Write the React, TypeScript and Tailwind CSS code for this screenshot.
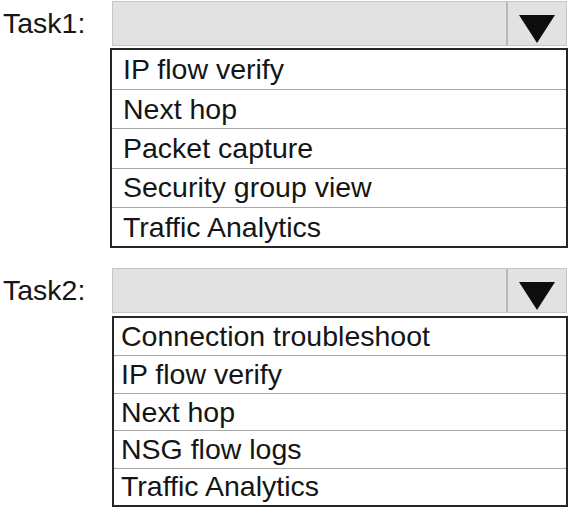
import React from "react";

const font = { fontFamily: '"Liberation Sans", Arial, sans-serif' };

function Arrow() {
  return (
    <svg width="36" height="28" viewBox="0 0 36 28">
      <polygon points="0,0 36,0 18,28" fill="#0d0d0d" />
    </svg>
  );
}

function Box() {
  return (
    <div className="flex-1 mr-[5px] flex border border-[#c6c6c6] bg-[#e2e2e2]">
      <div className="flex-1" />
      <div className="w-[60px] border-l-2 border-[#b8b8b8] flex justify-center pt-[13px]">
        <Arrow />
      </div>
    </div>
  );
}

function List({ items, rowClass, padClass, outerClass }: { items: string[]; rowClass: string; padClass: string; outerClass: string }) {
  return (
    <div className={`border-2 border-[#262626] bg-white ${outerClass}`}>
      {items.map((t, i) => (
        <div
          key={t}
          className={`${rowClass} ${padClass} flex items-center text-[28.5px] text-[#151515] leading-none whitespace-nowrap ${i > 0 ? "border-t border-[#a8a8a8]" : ""}`}
        >
          {t}
        </div>
      ))}
    </div>
  );
}

export default function App() {
  return (
    <div className="w-[572px] h-[513px] bg-white overflow-hidden" style={font}>
      <div className="pt-[1px]">
        <div className="flex h-[45px]">
          <div className="w-[112px] pl-[3px] flex items-center text-[28.5px] text-[#151515] leading-none">Task1:</div>
          <Box />
        </div>
        <List
          items={["IP flow verify", "Next hop", "Packet capture", "Security group view", "Traffic Analytics"]}
          rowClass="h-[39.2px]"
          padClass="pl-[11px]"
          outerClass="ml-[110px] mr-[4px] mt-[2px]"
        />
      </div>
      <div className="mt-[20px]">
        <div className="flex h-[45px]">
          <div className="w-[112px] pl-[3px] flex items-center text-[28.5px] text-[#151515] leading-none">Task2:</div>
          <Box />
        </div>
        <List
          items={["Connection troubleshoot", "IP flow verify", "Next hop", "NSG flow logs", "Traffic Analytics"]}
          rowClass="h-[37.4px]"
          padClass="pl-[7px]"
          outerClass="ml-[112px] mr-[4px] mt-[3px]"
        />
      </div>
    </div>
  );
}
